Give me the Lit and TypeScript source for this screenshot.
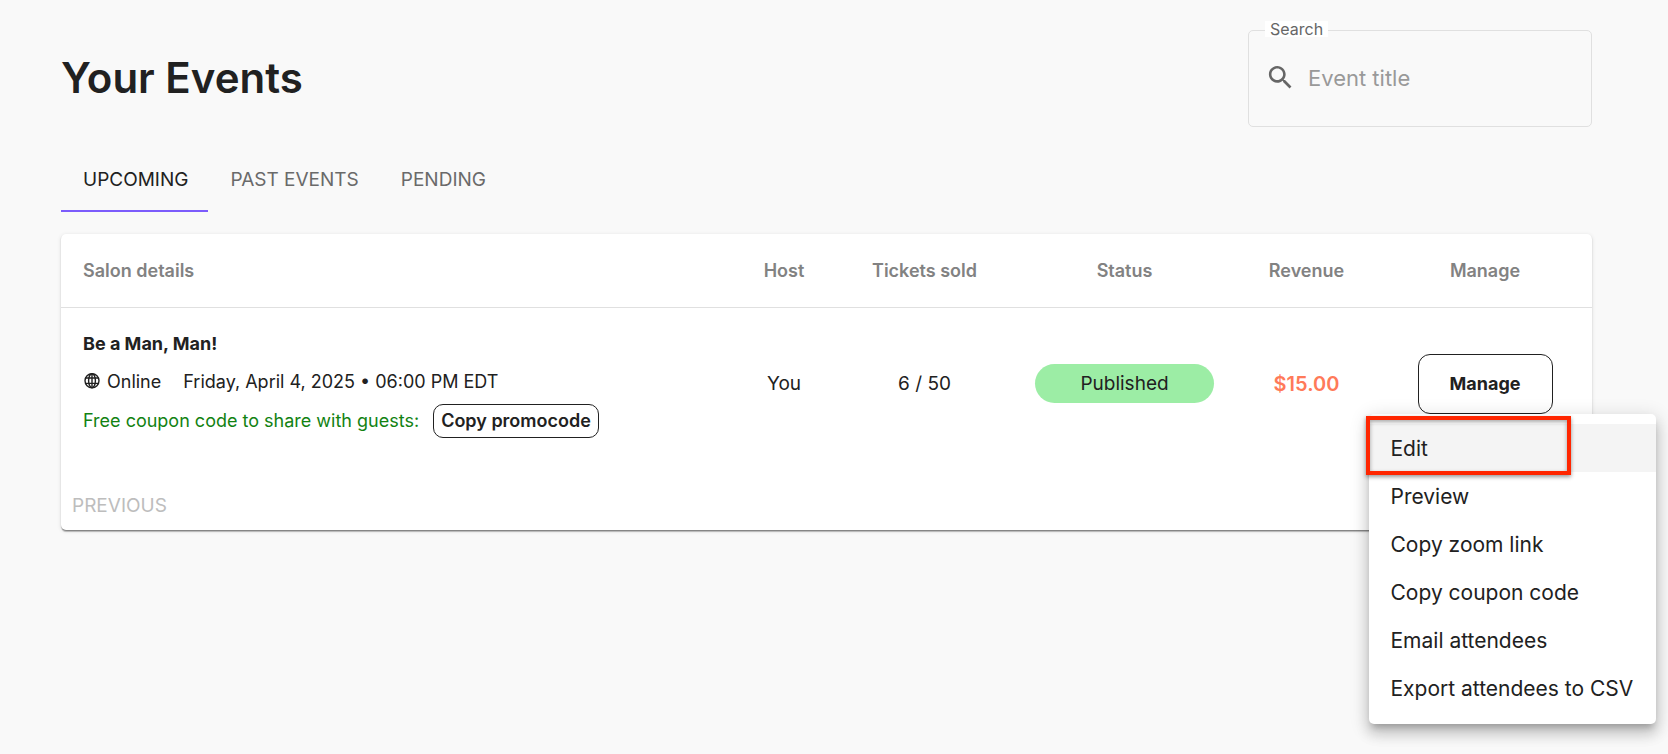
import { LitElement, html, css } from "lit";
import { customElement, state } from "lit/decorators.js";
import { classMap } from "lit/directives/class-map.js";

interface SalonEvent {
  title: string;
  place: string;
  date: string;
  host: string;
  tickets: string;
  status: string;
  revenue: string;
}

const TABS = ["Upcoming", "Past events", "Pending"];

const MENU_ITEMS = [
  "Edit",
  "Preview",
  "Copy zoom link",
  "Copy coupon code",
  "Email attendees",
  "Export attendees to CSV",
];

const EVENTS: SalonEvent[] = [
  {
    title: "Be a Man, Man!",
    place: "Online",
    date: "Friday, April 4, 2025 • 06:00 PM EDT",
    host: "You",
    tickets: "6 / 50",
    status: "Published",
    revenue: "$15.00",
  },
];

@customElement("manage-menu")
export class ManageMenu extends LitElement {
  static styles = css`
    :host {
      display: block;
      box-sizing: border-box;
      padding: 10px 0 12px;
      border-radius: 5px;
      background: #fff;
      box-shadow:
        0 6px 6px -3px rgba(0, 0, 0, 0.2),
        0 10px 13px 1px rgba(0, 0, 0, 0.14),
        0 4px 18px 3px rgba(0, 0, 0, 0.12);
    }
    .item {
      display: block;
      width: 100%;
      height: 48px;
      padding: 2px 22px 0;
      border: 0;
      background: none;
      color: #212121;
      font: inherit;
      font-size: 21px;
      text-align: left;
      white-space: nowrap;
      cursor: pointer;
    }
    .current {
      background: #f4f4f4;
    }
    .marker {
      position: absolute;
      top: 2px;
      left: -3px;
      box-sizing: border-box;
      width: 205px;
      height: 59px;
      border: 4px solid #ff2600;
      box-shadow:
        0 2px 4px rgba(0, 0, 0, 0.4),
        inset 0 2px 4px rgba(0, 0, 0, 0.35);
      pointer-events: none;
    }
  `;

  render() {
    return html`
      <div role="menu">
        ${MENU_ITEMS.map(
          (label, i) => html`<button
            role="menuitem"
            class=${classMap({ item: true, current: i === 0 })}
          >${label}</button>`,
        )}
      </div>
      <div class="marker"></div>
    `;
  }
}

@customElement("app-root")
export class AppRoot extends LitElement {
  @state() private tab = 0;
  @state() private menuOpen = true;

  static styles = css`
    :host {
      display: block;
      box-sizing: border-box;
      min-height: 100vh;
      padding: 30px 76px 30px 61px;
      background: #f9f9f9;
      color: #212121;
      font-family: Inter, "Open Sans", sans-serif;
      font-size: 18px;
      line-height: 24px;
    }
    button {
      font: inherit;
      color: inherit;
      cursor: pointer;
    }
    .top {
      display: flex;
      justify-content: space-between;
      align-items: flex-start;
    }
    h1 {
      margin: 0;
      padding-top: 22px;
      font-size: 42px;
      line-height: 52px;
      font-weight: 600;
    }
    .search {
      position: relative;
      display: flex;
      align-items: center;
      gap: 12px;
      box-sizing: border-box;
      width: 344px;
      height: 97px;
      padding: 0 16px 2px;
      border: 1px solid #e0e0e0;
      border-radius: 5px;
    }
    .search label {
      position: absolute;
      top: -10px;
      left: 16px;
      padding: 0 5px;
      background: #fff;
      color: #666;
      font-size: 16px;
      line-height: 16px;
    }
    .search svg {
      flex: none;
      width: 31px;
      height: 31px;
      fill: #666;
    }
    .search input {
      flex: 1;
      min-width: 0;
      padding: 0;
      border: 0;
      outline: 0;
      background: none;
      color: inherit;
      font: inherit;
      font-size: 22px;
    }
    .search input::placeholder {
      color: #999;
      opacity: 1;
    }
    .tabs {
      display: flex;
      margin: 22px 0;
    }
    .tab {
      padding: 19px 20px 18px 22px;
      border: 0;
      border-bottom: 2px solid transparent;
      background: none;
      color: #6a6a6a;
      font-size: 19px;
      text-transform: uppercase;
    }
    .tab.active {
      border-color: #7c5cfc;
      color: #212121;
    }
    .card {
      border-radius: 5px;
      background: #fff;
      box-shadow:
        0 3px 1px -1px rgba(0, 0, 0, 0.2),
        0 1px 1px rgba(0, 0, 0, 0.3),
        0 1px 4px rgba(0, 0, 0, 0.12);
    }
    table {
      width: 100%;
      border-collapse: collapse;
      table-layout: fixed;
    }
    th,
    td {
      padding: 0;
      text-align: center;
    }
    th:first-child,
    td:first-child {
      padding-left: 22px;
      text-align: left;
    }
    th {
      height: 73px;
      border-bottom: 1px solid #e0e0e0;
      color: #828282;
      font-weight: 600;
    }
    .host {
      width: 102px;
    }
    .sold {
      width: 179px;
    }
    .status {
      width: 221px;
    }
    .revenue {
      width: 143px;
    }
    .manage {
      width: 214px;
    }
    td {
      height: 152px;
      font-size: 19px;
    }
    .details {
      display: flex;
      flex-direction: column;
      padding-top: 2px;
      font-size: 18px;
    }
    .title {
      font-weight: 700;
      margin-bottom: 14px;
    }
    .when {
      display: flex;
      gap: 22px;
      margin-bottom: 10px;
    }
    .place {
      display: flex;
      align-items: center;
      gap: 6px;
    }
    .place svg {
      width: 18px;
      height: 18px;
      fill: none;
      stroke: #212121;
      stroke-width: 1.4;
    }
    .coupon {
      display: flex;
      align-items: center;
      gap: 14px;
      color: #128212;
    }
    .copy {
      height: 34px;
      padding: 0 7px;
      border: 1px solid #212121;
      border-radius: 10px;
      background: #fff;
      color: #212121;
      font-weight: 600;
      white-space: nowrap;
    }
    .pill {
      margin: 0 21px 2px;
      border-radius: 20px;
      background: #9ceda5;
      line-height: 39px;
    }
    .money {
      color: #ff7a59;
      font-size: 20px;
      font-weight: 600;
    }
    .anchor {
      position: relative;
      display: inline-block;
      vertical-align: middle;
    }
    .open {
      width: 135px;
      height: 60px;
      padding: 0;
      border: 1px solid #212121;
      border-radius: 12px;
      background: #fff;
      font-size: 18px;
      font-weight: 700;
    }
    manage-menu {
      position: absolute;
      z-index: 1;
      top: 100%;
      right: -103px;
      width: 287px;
    }
    .pager {
      display: flex;
      padding: 34px 11px 12px;
    }
    .pager button {
      padding: 0;
      border: 0;
      background: none;
      color: #bdbdbd;
      font-size: 19px;
      text-transform: uppercase;
    }
  `;

  private renderRow(event: SalonEvent) {
    return html`
      <tr>
        <td>
          <div class="details">
            <div class="title">${event.title}</div>
            <div class="when">
              <span class="place">
                <svg viewBox="0 0 18 18" aria-hidden="true">
                  <circle cx="9" cy="7.7" r="7" />
                  <ellipse cx="9" cy="7.7" rx="3.4" ry="7" />
                  <path d="M9 .7v14M2.4 5h13.2M2.4 10.4h13.2" />
                </svg>
                ${event.place}
              </span>
              <span>${event.date}</span>
            </div>
            <div class="coupon">
              <span>Free coupon code to share with guests:</span>
              <button class="copy">Copy promocode</button>
            </div>
          </div>
        </td>
        <td>${event.host}</td>
        <td>${event.tickets}</td>
        <td><div class="pill">${event.status}</div></td>
        <td class="money">${event.revenue}</td>
        <td>
          <div class="anchor">
            <button class="open" @click=${() => (this.menuOpen = !this.menuOpen)}>Manage</button>
            ${this.menuOpen ? html`<manage-menu></manage-menu>` : null}
          </div>
        </td>
      </tr>
    `;
  }

  render() {
    return html`
      <header class="top">
        <h1>Your Events</h1>
        <div class="search">
          <label for="q">Search</label>
          <svg viewBox="0 0 24 24" aria-hidden="true">
            <path
              d="M15.5 14h-.79l-.28-.27C15.41 12.59 16 11.11 16 9.5 16 5.91 13.09 3 9.5 3S3 5.91 3 9.5 5.91 16 9.5 16c1.61 0 3.09-.59 4.23-1.57l.27.28v.79l5 4.99L20.49 19l-4.99-5zm-6 0C7.01 14 5 11.99 5 9.5S7.01 5 9.5 5 14 7.01 14 9.5 11.99 14 9.5 14z"
            />
          </svg>
          <input id="q" type="text" placeholder="Event title" />
        </div>
      </header>
      <nav class="tabs" role="tablist">
        ${TABS.map(
          (label, i) => html`<button
            role="tab"
            class=${classMap({ tab: true, active: i === this.tab })}
            @click=${() => (this.tab = i)}
          >${label}</button>`,
        )}
      </nav>
      <main class="card">
        <table>
          <thead>
            <tr>
              <th>Salon details</th>
              <th class="host">Host</th>
              <th class="sold">Tickets sold</th>
              <th class="status">Status</th>
              <th class="revenue">Revenue</th>
              <th class="manage">Manage</th>
            </tr>
          </thead>
          <tbody>
            ${EVENTS.map((event) => this.renderRow(event))}
          </tbody>
        </table>
        <div class="pager"><button disabled>Previous</button></div>
      </main>
    `;
  }
}
